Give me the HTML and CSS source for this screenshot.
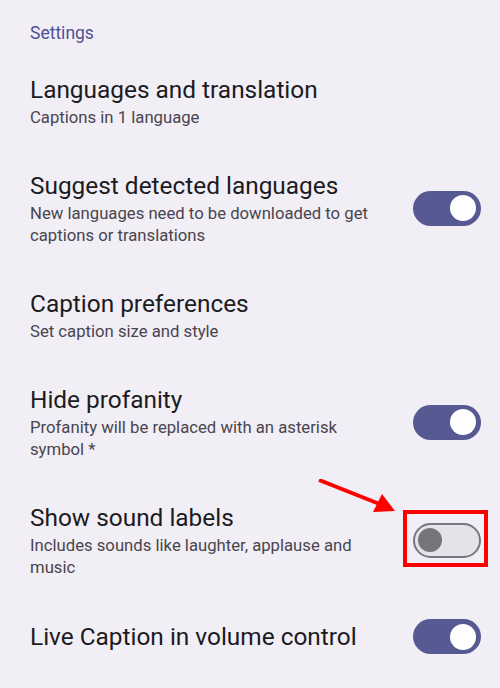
FILE: index.html
```html
<!DOCTYPE html>
<html lang="en">
<head>
    <meta charset="UTF-8">
    <meta name="viewport" content="width=device-width, initial-scale=1.0">
    <title>Live Caption settings</title>
    <link rel="stylesheet" href="styles.css">
</head>
<body>
    <div class="main">
        <div class="header">Settings</div>

        <div class="row">
            <div class="text">
                <div class="title">Languages and translation</div>
                <div class="sub">Captions in 1 language</div>
            </div>
        </div>

        <div class="row">
            <div class="text">
                <div class="title">Suggest detected languages</div>
                <div class="sub">New languages need to be downloaded to get captions or translations</div>
            </div>
            <div class="switch on"><span class="thumb"></span></div>
        </div>

        <div class="row">
            <div class="text">
                <div class="title">Caption preferences</div>
                <div class="sub">Set caption size and style</div>
            </div>
        </div>

        <div class="row">
            <div class="text">
                <div class="title">Hide profanity</div>
                <div class="sub">Profanity will be replaced with an asterisk symbol *</div>
            </div>
            <div class="switch on"><span class="thumb"></span></div>
        </div>

        <div class="row">
            <div class="text">
                <div class="title">Show sound labels</div>
                <div class="sub">Includes sounds like laughter, applause and music</div>
            </div>
            <div class="mark">
                <div class="switch off"><span class="thumb"></span></div>
                <!-- red arrow pointing at the toggle -->
                <svg class="arrow" width="90" height="40" viewBox="0 0 90 40">
                    <line x1="1" y1="1" x2="64" y2="26" stroke="#ff0000" stroke-width="4"/>
                    <polygon points="77,32 64,15 55,33" fill="#ff0000"/>
                </svg>
            </div>
        </div>

        <div class="row">
            <div class="text">
                <div class="title">Live Caption in volume control</div>
            </div>
            <div class="switch on"><span class="thumb"></span></div>
        </div>
    </div>
</body>
</html>
```

FILE: styles.css
```css
* {
    margin: 0;
    padding: 0;
    box-sizing: border-box;
}
body {
    background-color: #f1eef5;
    font-family: Roboto, "Noto Sans", sans-serif;
}
.main {
    width: 500px;
    height: 688px;
    overflow: hidden;
}
.header {
    color: #4d5196;
    font-size: 17.5px;
    line-height: 24px;
    padding: 21px 0 0 30px;
    height: 53px;
}
.row {
    display: flex;
    align-items: center;
    padding: 20px 19px 20px 30px;
}
.text {
    flex: 1;
    padding-right: 25px;
}
.title {
    font-size: 24.4px;
    color: #1c1b1f;
    line-height: 34px;
}
.sub {
    font-size: 16.7px;
    color: #49454f;
    line-height: 22px;
}
.switch {
    width: 68px;
    height: 35px;
    border-radius: 18px;
    position: relative;
    flex-shrink: 0;
}
.switch.on {
    background-color: #575a92;
}
.switch.on .thumb {
    position: absolute;
    width: 26px;
    height: 26px;
    top: 4.5px;
    right: 5px;
    border-radius: 50%;
    background-color: #ffffff;
}
.switch.off {
    background-color: #e5e2ea;
    border: 2.5px solid #79767f;
}
.switch.off .thumb {
    position: absolute;
    width: 24px;
    height: 24px;
    top: 3px;
    left: 3px;
    border-radius: 50%;
    background-color: #77747c;
}
.mark {
    position: relative;
}
.mark::before {
    content: "";
    position: absolute;
    box-sizing: border-box;
    left: -10px;
    top: -13px;
    width: 85px;
    height: 57px;
    border: 4px solid #ff0000;
}
.arrow {
    position: absolute;
    left: -95px;
    top: -44px;
}
```
